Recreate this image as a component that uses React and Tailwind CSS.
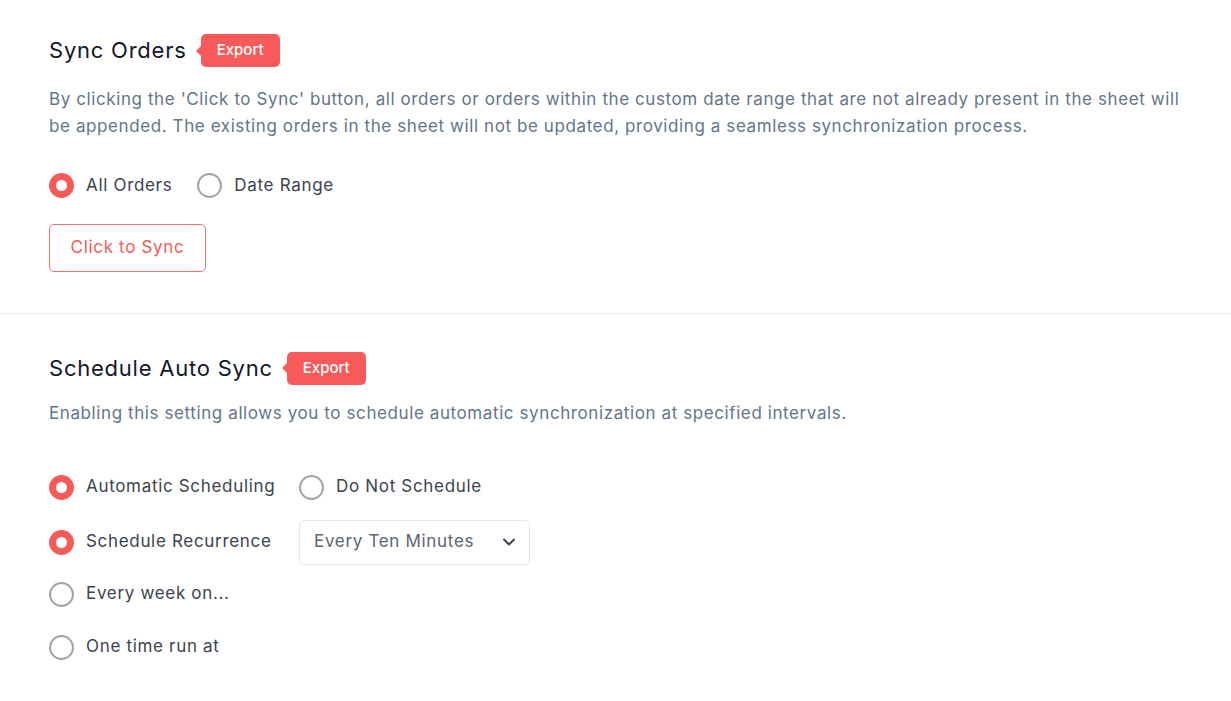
import { ChevronDown } from "lucide-react";

function Badge() {
  return (
    <span className="relative ml-[14px] inline-flex items-center h-[33px] px-[16px] rounded-[5px] bg-[#f85a5a] text-white text-[15px] font-medium">
      <span className="absolute left-[-5px] top-1/2 -translate-y-1/2 w-0 h-0 border-y-[5px] border-y-transparent border-r-[5px] border-r-[#f85a5a]" />
      Export
    </span>
  );
}

function Radio({ checked, label }) {
  return (
    <label className="flex items-center gap-[12px] cursor-pointer">
      <span
        className={
          checked
            ? "w-[25px] h-[25px] rounded-full border-[7px] border-[#f85a5a] bg-white"
            : "w-[25px] h-[25px] rounded-full border-2 border-[#a3a3a3] bg-white"
        }
      />
      <span className="text-[17px] tracking-[0.04em] text-[#3b4350]">{label}</span>
    </label>
  );
}

export default function App() {
  return (
    <div className="min-h-[701px] bg-white" style={{ fontFamily: "Inter, 'Noto Sans', sans-serif" }}>
      <section className="px-[49px] pt-[34px] pb-[41px] border-b border-[#e8ebf0]">
        <div className="flex items-center">
          <h2 className="text-[22px] tracking-[0.035em] text-[#111827] font-normal">Sync Orders</h2>
          <Badge />
        </div>
        <p className="mt-[19px] text-[17px] leading-[27px] tracking-[0.035em] text-[#64748b] max-w-[1140px]">
          By clicking the 'Click to Sync' button, all orders or orders within the custom date range that are not already present in the sheet will be appended. The existing orders in the sheet will not be updated, providing a seamless synchronization process.
        </p>
        <div className="mt-[33px] flex items-center gap-[25px]">
          <Radio checked label="All Orders" />
          <Radio label="Date Range" />
        </div>
        <button className="mt-[25px] w-[157px] h-[48px] rounded-[5px] border border-[#f87171] text-[#f45b5b] text-[17px] tracking-[0.04em]">
          Click to Sync
        </button>
      </section>

      <section className="px-[49px] pt-[38px]">
        <div className="flex items-center">
          <h2 className="text-[22px] tracking-[0.035em] text-[#111827] font-normal">Schedule Auto Sync</h2>
          <Badge />
        </div>
        <p className="mt-[15px] text-[17px] leading-[27px] tracking-[0.035em] text-[#64748b]">
          Enabling this setting allows you to schedule automatic synchronization at specified intervals.
        </p>
        <div className="mt-[38px] grid grid-cols-[250px_auto] items-center gap-y-[10px] w-fit">
          <div className="h-[45px] flex items-center">
            <Radio checked label="Automatic Scheduling" />
          </div>
          <div className="h-[45px] flex items-center">
            <Radio label="Do Not Schedule" />
          </div>
          <div className="h-[45px] flex items-center">
            <Radio checked label="Schedule Recurrence" />
          </div>
          <div className="w-[231px] h-[45px] rounded-[5px] border border-[#e5e7eb] flex items-center justify-between pl-[14px] pr-[10px] text-[17px] tracking-[0.04em] text-[#5b6472]">
            Every Ten Minutes
            <ChevronDown size={20} strokeWidth={2.25} className="text-[#374151]" />
          </div>
        </div>
        <div className="mt-[7px] h-[45px] flex items-center">
          <Radio label="Every week on..." />
        </div>
        <div className="mt-[8px] h-[45px] flex items-center">
          <Radio label="One time run at" />
        </div>
      </section>
    </div>
  );
}
